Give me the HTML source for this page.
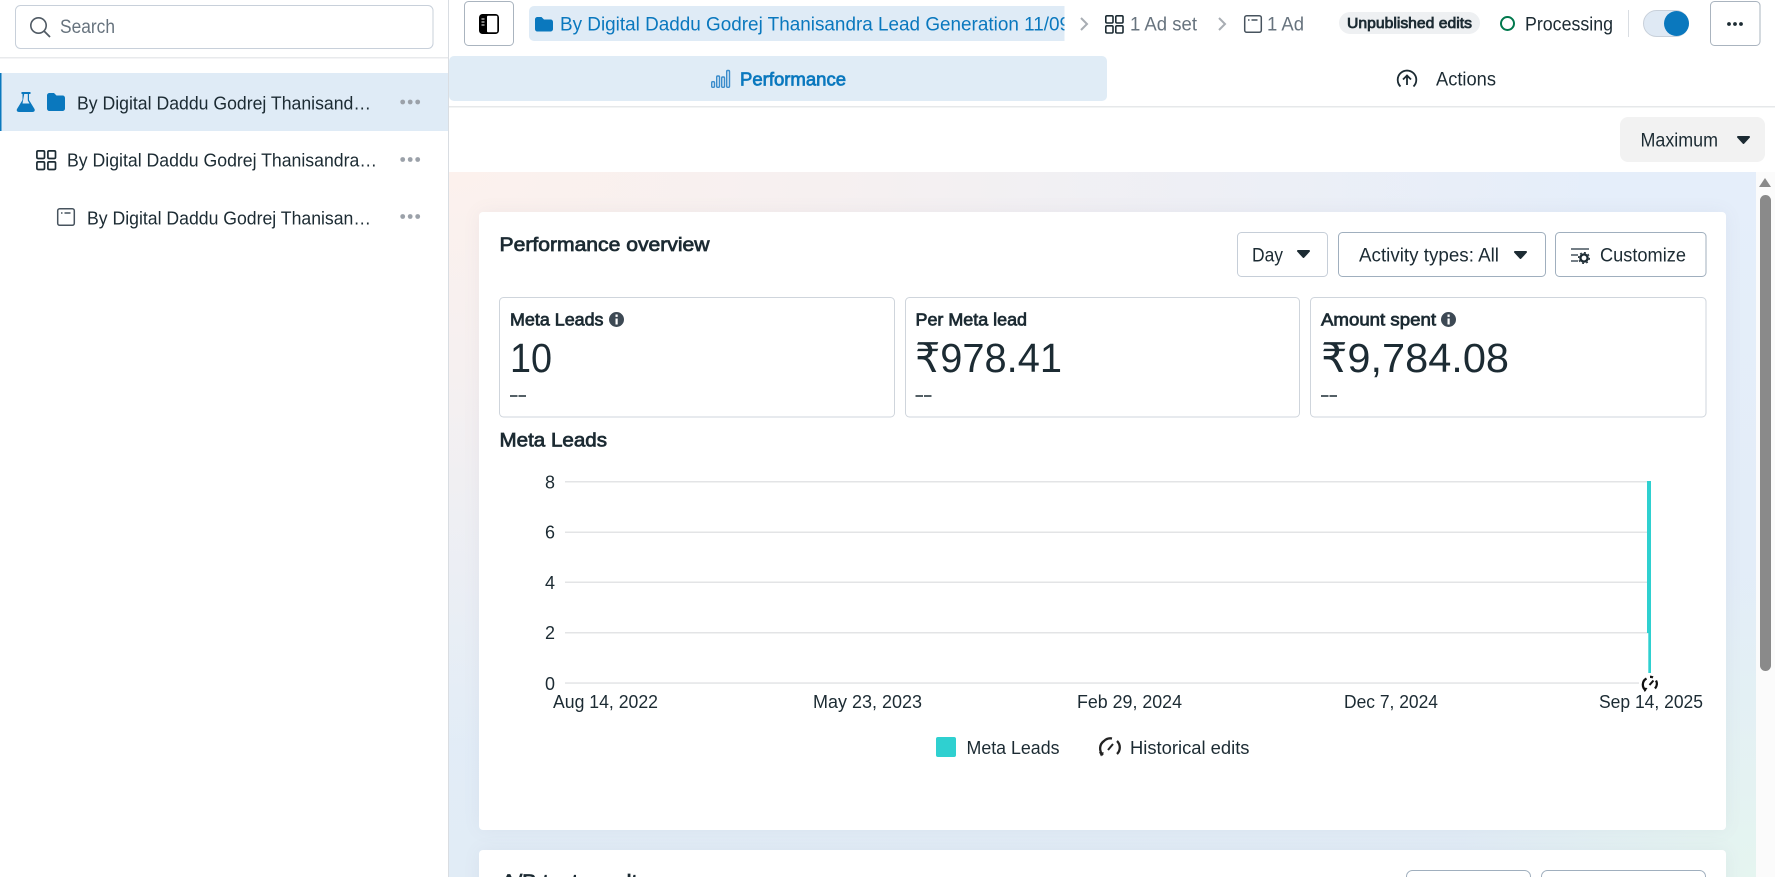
<!DOCTYPE html>
<html><head><meta charset="utf-8"><title>Performance</title>
<style>
html,body{margin:0;padding:0;width:1775px;height:877px;overflow:hidden;background:#fff}
#bg{position:absolute;left:449px;top:172px;width:1307px;height:705px;overflow:hidden;
background:radial-gradient(circle 300px at 100% 100%,#e5f5f0 0,rgba(229,245,240,0) 100%),radial-gradient(ellipse 1150px 580px at 0 0,#fcf1ed 0,rgba(252,241,237,.72) 35%,rgba(252,241,237,0) 100%),linear-gradient(#e5eefa,#e1ecf6)}
.sh{position:absolute;left:30px;width:1247px;border-radius:4px;background:#fff;box-shadow:0 0 18px rgba(110,100,130,.07)}
#sb{position:absolute;left:1756px;top:172px;width:19px;height:705px;background:#fbfbfb}
svg{position:absolute;left:0;top:0}
text{font-family:"Liberation Sans","DejaVu Sans",sans-serif;fill:#1c2b33}
.g{fill:#67737e}.bl{fill:#0a78be}
.b{stroke:#1c2b33;stroke-width:.75}
.b.bl{stroke:#0a78be}
</style></head><body>
<div id="bg"><div class="sh" style="top:40px;height:618px"></div><div class="sh" style="top:678px;height:60px"></div></div><div id="sb"></div>
<svg width="1775" height="877" viewBox="0 0 1775 877" xmlns="http://www.w3.org/2000/svg">
<!-- sidebar -->
<rect x="448" y="0" width="1" height="877" fill="#d9dde2"/>
<rect x="15.500" y="5.500" width="417.500" height="43" rx="5" fill="#fff" stroke="#c8d0da"/>
<circle cx="38.500" cy="25.500" r="7.700" fill="none" stroke="#505a64" stroke-width="1.600"/><path d="M44 31l6 6" stroke="#505a64" stroke-width="1.800" fill="none"/>
<text x="60" y="33" font-size="19" class="g" textLength="55" lengthAdjust="spacingAndGlyphs">Search</text>
<rect x="0" y="57" width="448" height="1.500" fill="#e8eaec"/>
<rect x="0" y="73" width="448" height="58" fill="#dfebf6"/><rect x="0" y="73" width="1.500" height="58" fill="#0a78be"/>
<path d="M21.500 92h9v2h-1.500v6l5.500 9c.8 1.600-.2 3-2 3H19c-1.800 0-2.800-1.400-2-3l5.500-9v-6h-1z" fill="#0a78be"/><path d="M24.200 94h3.600v6.500l1.700 3h-7z" fill="#dfebf6"/>
<path d="M47 95.500c0-1.400 1-2.500 2.500-2.500h4.500l2.500 2.500h6c1.400 0 2.500 1 2.500 2.500v10.500c0 1.400-1 2.500-2.500 2.500h-13c-1.400 0-2.500-1-2.500-2.500z" fill="#0a78be"/>
<text x="77" y="109.500" font-size="18.500" textLength="294" lengthAdjust="spacingAndGlyphs">By Digital Daddu Godrej Thanisand…</text>
<g fill="#9ba1a9"><circle cx="402.700" cy="102" r="2.400"/><circle cx="410.200" cy="102" r="2.400"/><circle cx="417.700" cy="102" r="2.400"/>
<circle cx="402.700" cy="159.500" r="2.400"/><circle cx="410.200" cy="159.500" r="2.400"/><circle cx="417.700" cy="159.500" r="2.400"/>
<circle cx="402.700" cy="216.500" r="2.400"/><circle cx="410.200" cy="216.500" r="2.400"/><circle cx="417.700" cy="216.500" r="2.400"/></g>
<g fill="none" stroke="#1c2b33" stroke-width="1.700"><rect x="36.900" y="150.900" width="7.600" height="7.600" rx="1.200"/><rect x="47.900" y="150.900" width="7.600" height="7.600" rx="1.200"/><rect x="36.900" y="161.900" width="7.600" height="7.600" rx="1.200"/><rect x="47.900" y="161.900" width="7.600" height="7.600" rx="1.200"/></g>
<text x="67" y="166.500" font-size="18.500" textLength="310" lengthAdjust="spacingAndGlyphs">By Digital Daddu Godrej Thanisandra…</text>
<rect x="57.700" y="208.700" width="16.600" height="16.600" rx="2" fill="none" stroke="#47535e" stroke-width="1.500"/><path d="M61 213h1.500M64.500 213h6" stroke="#47535e" stroke-width="1.400"/>
<text x="87" y="224.500" font-size="18.500" textLength="284" lengthAdjust="spacingAndGlyphs">By Digital Daddu Godrej Thanisan…</text>
<!-- top bar -->
<rect x="464.500" y="1.500" width="49" height="44" rx="4" fill="#fff" stroke="#aab4bf"/>
<rect x="479" y="14" width="20" height="20" rx="3.500" fill="#000"/><rect x="487" y="15.700" width="10.300" height="16.600" rx="1" fill="#fff"/><path d="M481.500 19h3M481.500 22h3M481.500 25h3" stroke="#fff" stroke-width="1"/>
<path d="M534 6h530.500v35H534a5 5 0 0 1-5-5V11a5 5 0 0 1 5-5z" fill="#dfebf6"/>
<path d="M535 19.500c0-1.400 1-2.500 2.500-2.500h4l2.500 2.500h6.500c1.400 0 2.500 1 2.500 2.500v7c0 1.400-1 2.500-2.500 2.500h-13c-1.400 0-2.500-1-2.500-2.500z" fill="#0a78be"/>
<svg x="0" y="0" width="1064.500" height="60"><text x="560" y="30.500" font-size="19" class="bl" textLength="510" lengthAdjust="spacingAndGlyphs">By Digital Daddu Godrej Thanisandra Lead Generation 11/09</text></svg>
<path d="M1081 18l6 6-6 6M1219 18l6 6-6 6" fill="none" stroke="#a8adb3" stroke-width="2"/>
<g fill="none" stroke="#1c2b33" stroke-width="1.600"><rect x="1105.800" y="15.800" width="7.200" height="7.200" rx="1.200"/><rect x="1115.800" y="15.800" width="7.200" height="7.200" rx="1.200"/><rect x="1105.800" y="25.800" width="7.200" height="7.200" rx="1.200"/><rect x="1115.800" y="25.800" width="7.200" height="7.200" rx="1.200"/></g>
<text x="1130" y="30.500" font-size="19" class="g" textLength="67" lengthAdjust="spacingAndGlyphs">1 Ad set</text>
<rect x="1244.700" y="15.700" width="16.600" height="16.600" rx="2" fill="none" stroke="#47535e" stroke-width="1.500"/><path d="M1248 20h1.500M1251.500 20h6" stroke="#47535e" stroke-width="1.400"/>
<text x="1267" y="30.500" font-size="19" class="g" textLength="37" lengthAdjust="spacingAndGlyphs">1 Ad</text>
<rect x="1339" y="12" width="141" height="22" rx="11" fill="#eef0f2"/>
<text x="1347" y="28" font-size="15" class="b" textLength="125" lengthAdjust="spacingAndGlyphs">Unpublished edits</text>
<circle cx="1507.500" cy="23.500" r="6.500" fill="none" stroke="#00784d" stroke-width="2"/>
<text x="1525" y="30.500" font-size="19" textLength="88" lengthAdjust="spacingAndGlyphs">Processing</text>
<rect x="1628" y="10" width="1" height="27" fill="#d9dde2"/>
<rect x="1643.500" y="10.500" width="45" height="26" rx="13" fill="#dfe9f4" stroke="#c8d0da"/><circle cx="1676.500" cy="23.500" r="12.500" fill="#0a78be"/>
<rect x="1710.500" y="1.500" width="49.500" height="44" rx="4" fill="#fff" stroke="#aab4bf"/>
<g fill="#1c2b33"><circle cx="1729" cy="24" r="1.900"/><circle cx="1735" cy="24" r="1.900"/><circle cx="1741" cy="24" r="1.900"/></g>
<!-- tabs -->
<rect x="449" y="56" width="658" height="45" rx="5" fill="#e0ecf6"/>
<g fill="none" stroke="#3a8ccb" stroke-width="1.400"><rect x="711.700" y="81.700" width="2.800" height="5.600" rx="1"/><rect x="716.700" y="76" width="2.800" height="11.300" rx="1"/><rect x="721.700" y="77" width="2.800" height="10.300" rx="1"/><rect x="726.700" y="70.500" width="2.800" height="16.800" rx="1"/></g>
<text x="740" y="85.500" font-size="18.500" class="b bl" textLength="106" lengthAdjust="spacingAndGlyphs">Performance</text>
<path d="M1400.500 86.500a9.300 9.300 0 1 1 13 0" fill="none" stroke="#1c2b33" stroke-width="1.800"/><path d="M1407 85v-9M1403 79.500l4-4 4 4" fill="none" stroke="#1c2b33" stroke-width="1.800"/>
<text x="1436" y="85.500" font-size="19" textLength="60" lengthAdjust="spacingAndGlyphs">Actions</text>
<rect x="449" y="106" width="1326" height="1.500" fill="#e6e8ea"/>
<rect x="1620" y="117" width="145" height="45" rx="8" fill="#f2f2f2"/>
<text x="1640.500" y="146.500" font-size="19" textLength="77.500" lengthAdjust="spacingAndGlyphs">Maximum</text>
<path d="M1738 137h11l-5.500 6z" fill="#1c2b33" stroke="#1c2b33" stroke-width="2" stroke-linejoin="round"/>
<!-- scrollbar -->
<path d="M1765 178l6 9h-12z" fill="#8a8a8a"/><rect x="1760" y="195" width="11" height="476" rx="5.500" fill="#8a8a8a"/>
<!-- card 1 -->
<text x="499.500" y="251" font-size="19.500" class="b" textLength="210" lengthAdjust="spacingAndGlyphs">Performance overview</text>
<rect x="1237.500" y="232.500" width="90" height="44" rx="4" fill="#fff" stroke="#c6ced8"/>
<text x="1252" y="261.500" font-size="19" textLength="31" lengthAdjust="spacingAndGlyphs">Day</text>
<path d="M1298 251h11l-5.500 6z" fill="#1c2b33" stroke="#1c2b33" stroke-width="2" stroke-linejoin="round"/>
<rect x="1338.500" y="232.500" width="207" height="44" rx="4" fill="#fff" stroke="#a0afbe"/>
<text x="1359" y="261.500" font-size="19" textLength="140" lengthAdjust="spacingAndGlyphs">Activity types: All</text>
<path d="M1515 252h11l-5.500 6z" fill="#1c2b33" stroke="#1c2b33" stroke-width="2" stroke-linejoin="round"/>
<rect x="1555.500" y="232.500" width="150.500" height="44" rx="4" fill="#fff" stroke="#a0afbe"/>
<path d="M1571 249h18M1571 255h7M1571 261h7" stroke="#47535e" stroke-width="1.400"/><circle cx="1584" cy="258" r="3.600" fill="none" stroke="#1c2b33" stroke-width="2.400"/><circle cx="1584" cy="258" r="5.400" fill="none" stroke="#1c2b33" stroke-width="1.200" stroke-dasharray="2 2.200"/>
<text x="1600" y="261.500" font-size="19" textLength="86" lengthAdjust="spacingAndGlyphs">Customize</text>
<!-- metric cards -->
<g fill="#fff" stroke="#cfd5dc"><rect x="499.500" y="297.500" width="395" height="119.500" rx="4"/><rect x="905.500" y="297.500" width="394" height="119.500" rx="4"/><rect x="1310.500" y="297.500" width="395.500" height="119.500" rx="4"/></g>
<text x="510" y="325.500" font-size="17.500" class="b" textLength="93.500" lengthAdjust="spacingAndGlyphs">Meta Leads</text>
<circle cx="616.500" cy="319.500" r="7.500" fill="#3d4954"/><rect x="615.500" y="318.500" width="2.200" height="6" fill="#fff"/><rect x="615.500" y="314.500" width="2.200" height="2.400" fill="#fff"/>
<text x="510" y="372" font-size="41" textLength="42" lengthAdjust="spacingAndGlyphs">10</text>
<path d="M510 396h7.500M518.500 396h7.500M915.500 396h7.500M924 396h7.500M1321 396h7.500M1329.500 396h7.500" stroke="#1c2b33" stroke-width="1.500"/>
<text x="915.500" y="325.500" font-size="17.500" class="b" textLength="111.500" lengthAdjust="spacingAndGlyphs">Per Meta lead</text>
<text x="915" y="372" font-size="41" textLength="147" lengthAdjust="spacingAndGlyphs">₹978.41</text>
<text x="1321" y="325.500" font-size="17.500" class="b" textLength="115" lengthAdjust="spacingAndGlyphs">Amount spent</text>
<circle cx="1448.500" cy="319.500" r="7.500" fill="#3d4954"/><rect x="1447.500" y="318.500" width="2.200" height="6" fill="#fff"/><rect x="1447.500" y="314.500" width="2.200" height="2.400" fill="#fff"/>
<text x="1321" y="372" font-size="41" textLength="188" lengthAdjust="spacingAndGlyphs">₹9,784.08</text>
<text x="499.500" y="446.500" font-size="19.500" class="b" textLength="107.500" lengthAdjust="spacingAndGlyphs">Meta Leads</text>
<!-- chart -->
<g fill="#e3e4e6"><rect x="565" y="481" width="1084" height="1.500"/><rect x="565" y="531.500" width="1084" height="1.500"/><rect x="565" y="581.500" width="1084" height="1.500"/><rect x="565" y="632" width="1084" height="1.500"/><rect x="565" y="682.300" width="1074" height="1.500"/></g>
<g font-size="18.500"><text x="545" y="488.500" textLength="10" lengthAdjust="spacingAndGlyphs">8</text><text x="545" y="538.500" textLength="10" lengthAdjust="spacingAndGlyphs">6</text><text x="545" y="589" textLength="10" lengthAdjust="spacingAndGlyphs">4</text><text x="545" y="639" textLength="10" lengthAdjust="spacingAndGlyphs">2</text><text x="545" y="690" textLength="10" lengthAdjust="spacingAndGlyphs">0</text></g>
<path d="M1647 481h4v152h-4z M1648.300 633h2.700v40h-2.700z" fill="#2fd0d0"/>
<g fill="none" stroke="#111" stroke-width="2.300"><path d="M1646 690.500a7 7 0 0 1 .5-12"/><path d="M1650 676.800a7 7 0 0 1 3 .6M1656 680.500a7 7 0 0 1 -1 8"/><path d="M1649.500 685l4-4.500" stroke-width="2"/></g><path d="M1643 687.500l4.500 .5-3 4z" fill="#111"/>
<g font-size="18"><text x="553" y="708" textLength="105" lengthAdjust="spacingAndGlyphs">Aug 14, 2022</text><text x="813" y="708" textLength="109" lengthAdjust="spacingAndGlyphs">May 23, 2023</text><text x="1077" y="708" textLength="105" lengthAdjust="spacingAndGlyphs">Feb 29, 2024</text><text x="1344" y="708" textLength="94" lengthAdjust="spacingAndGlyphs">Dec 7, 2024</text><text x="1599" y="708" textLength="104" lengthAdjust="spacingAndGlyphs">Sep 14, 2025</text></g>
<rect x="936" y="737" width="20" height="20" rx="2" fill="#2fd0d0"/>
<text x="966.500" y="754" font-size="18" textLength="93" lengthAdjust="spacingAndGlyphs">Meta Leads</text>
<g fill="none" stroke="#222" stroke-width="2.300"><path d="M1103 755a9 9 0 0 1 1-14a9 9 0 0 1 8-2.500"/><path d="M1117 741a9 9 0 0 1 0 13"/><path d="M1108 750l5-6" stroke-width="2"/></g><path d="M1099 752l5 .5-3 4z" fill="#222"/>
<text x="1130" y="754" font-size="18" textLength="119.500" lengthAdjust="spacingAndGlyphs">Historical edits</text>
<!-- card 2 -->
<rect x="1406.500" y="870.500" width="124" height="30" rx="6" fill="#fff" stroke="#a0afbe"/>
<rect x="1541.500" y="870.500" width="164" height="30" rx="6" fill="#fff" stroke="#a0afbe"/>
<text x="501.500" y="888" font-size="19.500" class="b" textLength="147" lengthAdjust="spacingAndGlyphs">A/B test results</text>
</svg>
</body></html>
